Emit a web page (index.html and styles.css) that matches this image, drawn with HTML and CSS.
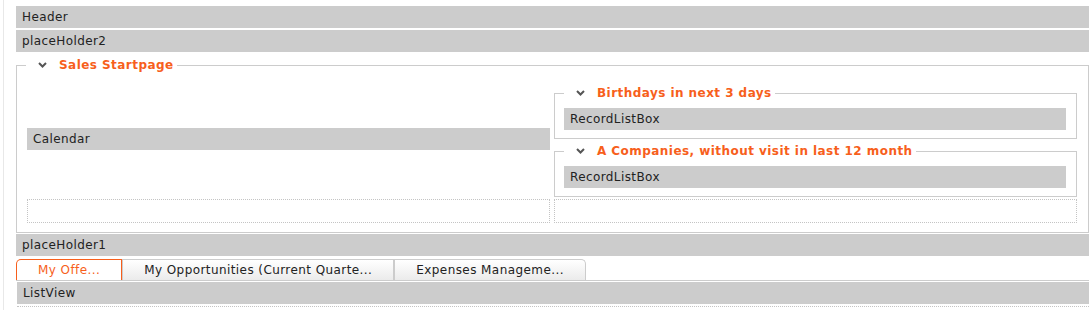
FILE: index.html
```html
<!DOCTYPE html>
<html>
<head>
<meta charset="utf-8">
<title>Sales Startpage</title>
<link rel="stylesheet" href="styles.css">
</head>
<body>
<div class="page">
  <div class="bar">Header</div>
  <div class="bar gap2">placeHolder2</div>

  <fieldset class="group main-group">
    <legend class="group-title"><svg class="chev" width="9" height="6" viewBox="0 0 9 6"><polyline points="1,1 4.5,4.5 8,1" fill="none" stroke="#555" stroke-width="2"/></svg>Sales Startpage</legend>
    <div class="grid">
      <div class="cell-left">
        <div class="bar">Calendar</div>
      </div>
      <div class="cell-right">
        <fieldset class="group sub-group">
          <legend class="group-title"><svg class="chev" width="9" height="6" viewBox="0 0 9 6"><polyline points="1,1 4.5,4.5 8,1" fill="none" stroke="#555" stroke-width="2"/></svg>Birthdays in next 3 days</legend>
          <div class="bar">RecordListBox</div>
        </fieldset>
        <fieldset class="group sub-group">
          <legend class="group-title"><svg class="chev" width="9" height="6" viewBox="0 0 9 6"><polyline points="1,1 4.5,4.5 8,1" fill="none" stroke="#555" stroke-width="2"/></svg>A Companies, without visit in last 12 month</legend>
          <div class="bar">RecordListBox</div>
        </fieldset>
      </div>
      <div class="empty-cell"></div>
      <div class="empty-cell"></div>
    </div>
  </fieldset>

  <div class="bar gap1">placeHolder1</div>

  <div class="tabs">
    <div class="tab active">My Offe...</div>
    <div class="tab">My Opportunities (Current Quarte...</div>
    <div class="tab last">Expenses Manageme...</div>
  </div>
  <div class="listview">
    <div class="bar">ListView</div>
  </div>
</div>
</body>
</html>
```
FILE: styles.css
```css
html, body {
  margin: 0;
  padding: 0;
  background: #fff;
}
body {
  font-family: "DejaVu Sans", Verdana, sans-serif;
  font-size: 12px;
  letter-spacing: 0.4px;
  color: #222;
}
.page {
  margin-left: 3px;
  border-left: 1px solid #e8e8e8;
  padding: 6px 3px 0 12px;
  min-height: 310px;
  box-sizing: border-box;
}
.bar {
  background: #ccc;
  height: 22px;
  line-height: 23px;
  padding-left: 6px;
  white-space: nowrap;
  overflow: hidden;
}
.gap2 { margin-top: 2px; }
.gap1 { margin-top: 1px; }

.group {
  border: 1px solid #ccc;
  margin: 0;
  min-width: 0;
}
.group-title {
  font-weight: bold;
  letter-spacing: 0.45px;
  color: #f75f1c;
  line-height: 17px;
  height: 16px;
  padding: 0 3px 0 12px;
  white-space: nowrap;
}
.chev {
  display: inline-block;
  vertical-align: 1px;
  margin-right: 12px;
}
.main-group {
  margin-top: 5px;
  padding: 0 11px 9px 10px;
}
.main-group > .group-title {
  margin-left: -1px;
}
.grid {
  margin-top: 7px;
  display: grid;
  grid-template-columns: 1fr 1fr;
  column-gap: 4px;
  row-gap: 1px;
}
.cell-left {
  align-self: center;
}
.cell-right {
  padding: 5px 0 1px;
  display: flex;
  flex-direction: column;
  gap: 4px;
}
.sub-group {
  padding: 0 10px 8px 9px;
}
.sub-group > .bar {
  margin-top: 7px;
}
.empty-cell {
  height: 22px;
  border: 1px dotted #c4c4c4;
}

.tabs {
  margin-top: 3px;
  display: flex;
  border-bottom: 1px solid #ccc;
}
.tab {
  height: 20px;
  line-height: 21px;
  padding: 0 21px;
  letter-spacing: 0.42px;
  border: 1px solid #ccc;
  border-bottom: none;
  background: linear-gradient(#ffffff, #ebebeb);
  white-space: nowrap;
  overflow: hidden;
}
.tab.active {
  color: #f75f1c;
  border-color: #f75f1c;
  background: #fff;
  border-top-left-radius: 5px;
}
.tab.last {
  border-top-right-radius: 5px;
}
.listview {
  margin: 1px 0 0 1px;
  padding-bottom: 2px;
  border-bottom: 1px dotted #c4c4c4;
}
```
